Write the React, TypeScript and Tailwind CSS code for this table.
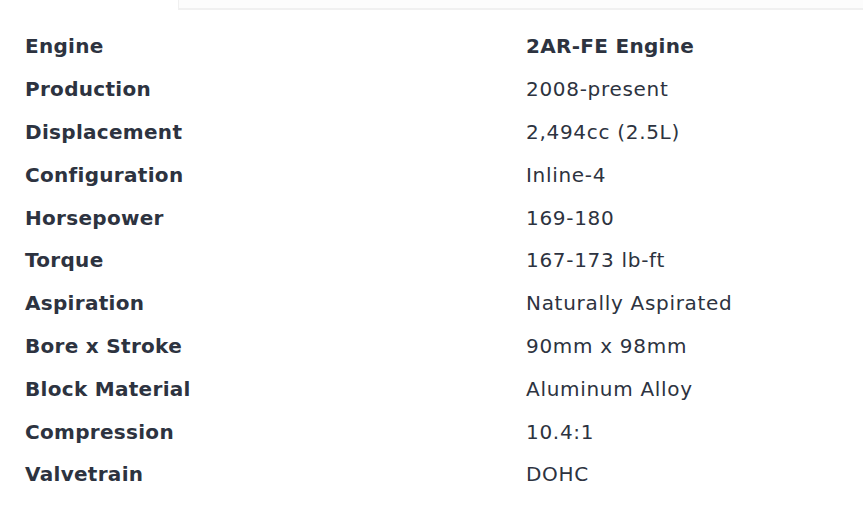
const specs: [string, string][] = [
  ["Engine", "2AR-FE Engine"],
  ["Production", "2008-present"],
  ["Displacement", "2,494cc (2.5L)"],
  ["Configuration", "Inline-4"],
  ["Horsepower", "169-180"],
  ["Torque", "167-173 lb-ft"],
  ["Aspiration", "Naturally Aspirated"],
  ["Bore x Stroke", "90mm x 98mm"],
  ["Block Material", "Aluminum Alloy"],
  ["Compression", "10.4:1"],
  ["Valvetrain", "DOHC"],
];

export default function App() {
  return (
    <div className="h-[515px] w-[863px] overflow-hidden bg-white font-['DejaVu_Sans',sans-serif] text-[#2d3340]">
      <div className="ml-[178px] h-[10px] border-b-2 border-l border-[#f0f0f0] bg-[#fcfcfc]" />
      <table className="mt-[15px] w-full border-collapse text-[20px]">
        <tbody>
          {specs.map(([label, value], i) => (
            <tr key={label} className="h-[42.8px]">
              <td className="w-[526px] pl-[25px] font-bold tracking-[0.3px]">{label}</td>
              <td className={i === 0 ? "font-bold tracking-[0.3px]" : "font-normal tracking-[0.7px]"}>
                {value}
              </td>
            </tr>
          ))}
        </tbody>
      </table>
    </div>
  );
}
